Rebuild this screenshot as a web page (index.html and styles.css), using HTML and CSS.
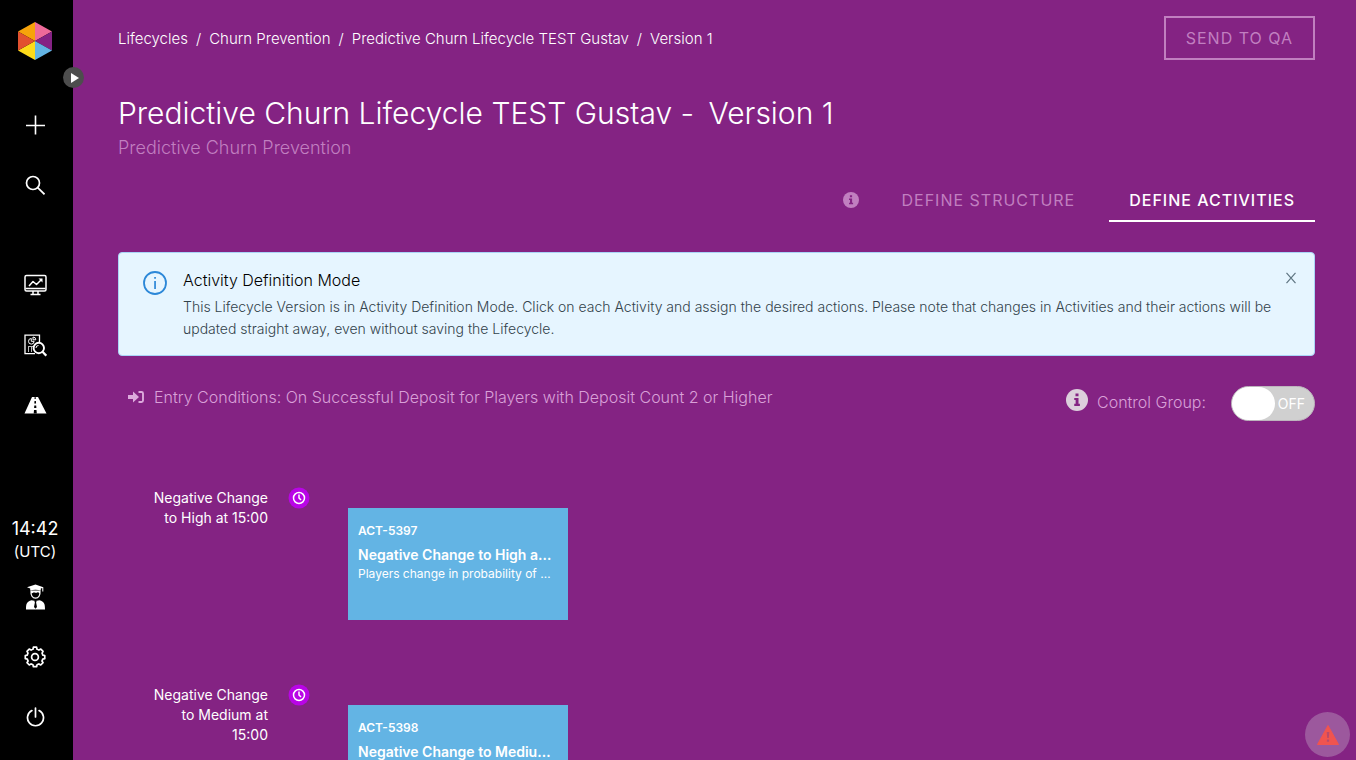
FILE: index.html
```html
<!DOCTYPE html>
<html lang="en">
<head>
  <meta charset="UTF-8" />
  <meta name="viewport" content="width=device-width, initial-scale=1.0" />
  <title>Predictive Churn Lifecycle TEST Gustav - Version 1</title>
  <link rel="stylesheet" href="styles.css">
</head>
<body>
  <nav class="sidebar">
    <a class="logo" href="#" aria-label="Home">
      <svg width="36" height="40" viewBox="0 0 36 40">
        <path d="M18 20V1L1 10.500z" fill="#f7a30a"/>
        <path d="M18 20V1l17 9.500z" fill="#ee6a9a"/>
        <path d="M18 20L35 10.500v19z" fill="#852284"/>
        <path d="M18 20l17 9.500L18 39z" fill="#63b4e4"/>
        <path d="M18 20v19L1 29.500z" fill="#fddb1a"/>
        <path d="M18 20L1 29.500v-19z" fill="#e2512f"/>
      </svg>
    </a>
    <div class="nav-group">
      <a class="nav-item" href="#" aria-label="Create">
        <svg width="20" height="20" viewBox="0 0 20 20" fill="none" stroke="#fff" stroke-width="1.600"><path d="M10.500 .5v19M1 10.500h19"/></svg>
      </a>
      <a class="nav-item" href="#" aria-label="Search">
        <svg width="20" height="20" viewBox="0 0 20 20" fill="none" stroke="#fff" stroke-width="1.700"><circle cx="8" cy="8" r="6.500"/><path d="M12.700 12.700l6.800 6.600"/></svg>
      </a>
    </div>
    <div class="nav-group">
      <a class="nav-item" href="#" aria-label="Dashboards">
        <svg width="24" height="22" viewBox="0 0 24 22" fill="none" stroke="#fff" stroke-width="1.500" stroke-linejoin="round">
          <rect x="2" y="1.500" width="21" height="15.500" rx="1.500"/>
          <path d="M2.500 14.500h20M10 17v3M15 17v3M7.500 20.500h10"/>
          <path d="M6 12l4-4.500 3.500 3L18 6"/><path d="M15.500 4.500h4v4z" fill="#fff" stroke="none"/>
        </svg>
      </a>
      <a class="nav-item" href="#" aria-label="Reports">
        <svg width="24" height="24" viewBox="0 0 24 24" fill="none" stroke="#fff" stroke-width="1.300">
          <path d="M16.500 9V2.200H2v18.500h10"/>
          <g stroke-width="1"><path d="M8.300 5.500a2.800 2.800 0 1 0 2.800 2.800H8.300z"/><path d="M10 4v2.800h2.800A2.800 2.800 0 0 0 10 4z"/></g>
          <path d="M5 13.500h5M5.500 14v5M8.500 14v5" stroke="#bbb" stroke-width="1"/>
          <circle cx="15.800" cy="15" r="5.200" stroke-width="1.900"/><path d="M19.500 18.700l3.800 4" stroke-width="2.200"/><path d="M13 15a2.500 2.500 0 0 1 2.500-2.500" stroke-width="1"/>
        </svg>
      </a>
      <a class="nav-item" href="#" aria-label="Lifecycles">
        <svg width="24" height="18" viewBox="0 0 24 18">
          <path d="M9 1h6l8.500 16.500h-22z" fill="#fff"/>
          <path d="M11.700 1h.9l.2 2h-1.300zM11.500 5h1.400l.2 2.500h-1.800zM11.300 9.500h1.900l.2 2.500h-2.300zM11 14h2.500l.3 3.500h-3.100z" fill="#000"/>
        </svg>
      </a>
    </div>
    <div class="nav-bottom">
      <div class="clock">14:42<span class="zone">(UTC)</span></div>
      <a class="nav-item" href="#" aria-label="Profile">
        <svg width="20" height="26" viewBox="0 0 20 26">
          <path d="M10.500 .5L2 3.300l3.200 1.300v2.200c3-1.500 7.600-1.500 10.600 0V4.600l1.500-.6v3.500h1V3.300z" fill="#fff"/>
          <path d="M6 7c-.4 4.500 1.500 7.200 4.500 7.200S15.400 11.500 15 7" fill="none" stroke="#fff" stroke-width="1.200"/>
          <path d="M6 9.500v-3h9v3c-1-.5-1.500-.8-2-1.500-1 1-2.500 1.200-4 .3-.8.600-1.800.8-3 1.200z" fill="#fff"/>
          <path d="M1 25.500c0-6 .8-8 5.500-9.300L10.500 17l4-.8c4.700 1.300 5.500 3.300 5.500 9.300z" fill="#fff"/>
          <path d="M9.300 16.700h2.400l-.6 1.800.9 4.500-1.500 1.800L9 23l.9-4.500z" fill="#000"/>
        </svg>
      </a>
      <a class="nav-item" href="#" aria-label="Settings">
        <svg width="22" height="22" viewBox="0 0 22 22" fill="none" stroke="#fff" stroke-width="1.700" stroke-linejoin="round">
          <path d="M8.950 3.200L9.400 1.200h3.200l.45 2c.7.2 1.300.5 1.900.9l1.900-1 2.200 2.300-1 1.800c.3.600.6 1.300.7 1.900l2 .4v3.200l-2 .4c-.2.700-.4 1.300-.8 1.900l1.100 1.700-2.300 2.300-1.800-1.100c-.6.400-1.200.6-1.900.8l-.45 2H9.400l-.45-2c-.7-.2-1.300-.4-1.900-.8L5.300 19 3 16.700 4.100 15c-.4-.6-.6-1.200-.8-1.900l-2-.4V9.500l2-.4c.1-.6.4-1.300.7-1.900L3 5.400l2.200-2.300 1.900 1c.6-.4 1.200-.7 1.850-.9z"/>
          <circle cx="11" cy="11" r="3.400"/>
        </svg>
      </a>
      <a class="nav-item" href="#" aria-label="Log out">
        <svg width="20" height="20" viewBox="0 0 20 20" fill="none" stroke="#fff" stroke-width="1.700" stroke-linecap="round"><path d="M10.500 1v9M6.900 3.600a8 8 0 1 0 7.200 0"/></svg>
      </a>
    </div>
    <button class="expand" type="button" aria-label="Expand menu">
      <svg width="8" height="10" viewBox="0 0 8 10"><path d="M0 0l8 5-8 5z" fill="#fff"/></svg>
    </button>
  </nav>

  <main class="content">
    <header class="topbar">
      <nav class="breadcrumb">
        <a href="#">Lifecycles</a><span>/</span><a href="#">Churn Prevention</a><span>/</span><a href="#">Predictive Churn Lifecycle TEST Gustav</a><span>/</span><a href="#">Version 1</a>
      </nav>
      <button class="send" type="button" disabled>SEND TO QA</button>
    </header>

    <h1>Predictive Churn Lifecycle TEST Gustav - <span class="version">Version 1</span></h1>
    <p class="subtitle">Predictive Churn Prevention</p>

    <div class="tabs">
      <svg class="tab-info" width="16" height="16" viewBox="0 0 16 16"><circle cx="8" cy="8" r="8" fill="#c17fc0"/><path d="M6.900 3.200h2.200v2H6.900zM6 6.500h3.100v4.300h1V12.300H6v-1.500h1V8H6z" fill="#842383"/></svg>
      <button class="tab" type="button">DEFINE STRUCTURE</button>
      <button class="tab active" type="button">DEFINE ACTIVITIES</button>
    </div>

    <section class="alert">
      <svg class="alert-icon" width="24" height="24" viewBox="0 0 24 24"><circle cx="12" cy="12" r="11" fill="none" stroke="#2b87d8" stroke-width="1.800"/><path d="M11.200 6h1.700v1.700h-1.700zM11.200 10h1.700v8h-1.700z" fill="#2b87d8"/></svg>
      <div class="alert-text">
        <h2>Activity Definition Mode</h2>
        <p>This Lifecycle Version is in Activity Definition Mode. Click on each Activity and assign the desired actions. Please note that changes in Activities and their actions will be updated straight away, even without saving the Lifecycle.</p>
      </div>
      <button class="close" type="button" aria-label="Close">
        <svg width="10" height="12" viewBox="0 0 10 12" fill="none" stroke="#5f7582" stroke-width="1.200"><path d="M.5 .8l9 10.400M9.500 .8l-9 10.400"/></svg>
      </button>
    </section>

    <div class="conditions">
      <p class="entry">
        <svg width="16" height="12" viewBox="0 0 16 12"><path d="M0 4h5V.5L11 6l-6 5.500V8H0z" fill="#dcaadc"/><path d="M10.500 1h3a1.500 1.500 0 0 1 1.500 1.500v7a1.500 1.500 0 0 1-1.500 1.500h-3" fill="none" stroke="#dcaadc" stroke-width="1.900"/></svg>
        Entry Conditions: On Successful Deposit for Players with Deposit Count 2 or Higher
      </p>
      <div class="control-group">
        <svg class="control-info" width="22" height="22" viewBox="0 0 16 16"><circle cx="8" cy="8" r="8" fill="#dccfdc"/><path d="M6.900 3.200h2.200v2H6.900zM6 6.500h3.100v4.300h1V12.300H6v-1.500h1V8H6z" fill="#842383"/></svg>
        <label for="control">Control Group:</label>
        <span class="switch">
          <input type="checkbox" id="control">
          <span class="state">OFF</span>
        </span>
      </div>
    </div>

    <section class="timeline">
      <article class="step">
        <div class="when">Negative Change to High at 15:00</div>
        <svg class="time-icon" width="22" height="22" viewBox="0 0 22 22"><circle cx="11" cy="11" r="10.500" fill="#b905e6"/><g fill="none" stroke="#fff" stroke-width="1.500"><circle cx="11" cy="11" r="5.500"/><path d="M11 7.500V11l2 2"/></g></svg>
        <a class="card" href="#">
          <span class="code">ACT-5397</span>
          <strong>Negative Change to High a…</strong>
          <span class="desc">Players change in probability of …</span>
        </a>
      </article>
      <article class="step">
        <div class="when">Negative Change to Medium at 15:00</div>
        <svg class="time-icon" width="22" height="22" viewBox="0 0 22 22"><circle cx="11" cy="11" r="10.500" fill="#b905e6"/><g fill="none" stroke="#fff" stroke-width="1.500"><circle cx="11" cy="11" r="5.500"/><path d="M11 7.500V11l2 2"/></g></svg>
        <a class="card" href="#">
          <span class="code">ACT-5398</span>
          <strong>Negative Change to Mediu…</strong>
          <span class="desc">Players change in probability of …</span>
        </a>
      </article>
    </section>
  </main>

  <button class="warning" type="button" aria-label="Warnings">
    <svg width="22" height="20" viewBox="0 0 22 20"><path d="M11 .5L21.500 19.500H.5z" fill="#f0544f" stroke="#f0544f" stroke-linejoin="round"/><path d="M9.700 7h2.600l-.5 6h-1.600zM9.900 14.500h2.200v2.200H9.900z" fill="#b94a6c"/></svg>
  </button>
</body>
</html>
```
FILE: styles.css
```css
* {
  box-sizing: border-box;
}
body {
  margin: 0;
  display: flex;
  height: 100vh;
  overflow: hidden;
  font-family: Inter, sans-serif;
  font-size: 14px;
  background: #842383;
  color: #fff;
}
a {
  color: inherit;
  text-decoration: none;
}
button {
  font-family: inherit;
  color: inherit;
  background: none;
  border: none;
  padding: 0;
  cursor: pointer;
}
h1, h2, p {
  margin: 0;
}
svg {
  flex-shrink: 0;
}

/* sidebar */
.sidebar {
  position: relative;
  display: flex;
  flex-direction: column;
  flex: 0 0 73px;
  padding: 21px 3px 13px 0;
  background: #000;
}
.logo {
  display: flex;
  justify-content: center;
  height: 40px;
  margin-bottom: 34px;
}
.nav-group {
  margin-bottom: 40px;
}
.nav-item {
  display: flex;
  align-items: center;
  justify-content: center;
  height: 60px;
}
.nav-bottom {
  margin-top: auto;
}
.clock {
  font-size: 18px;
  line-height: 24px;
  text-align: center;
  margin-bottom: 4px;
}
.zone {
  display: block;
  font-size: 15px;
  line-height: 22px;
}
.expand {
  position: absolute;
  top: 67px;
  right: -11px;
  display: flex;
  align-items: center;
  justify-content: center;
  width: 21px;
  height: 21px;
  padding-left: 2px;
  border-radius: 50%;
  background: #4d4d4d;
}

/* page */
.content {
  flex: 1;
  min-width: 0;
  padding: 16px 41px 40px 45px;
  overflow-y: auto;
  scrollbar-width: none;
}
.topbar {
  display: flex;
  align-items: center;
  justify-content: space-between;
}
.breadcrumb {
  display: flex;
  gap: 8px;
  font-size: 15px;
  font-weight: 300;
}
.send {
  height: 44px;
  padding: 0 20px;
  border: 2px solid #c17fc0;
  font-size: 16px;
  letter-spacing: 1px;
  color: #c17fc0;
}
h1 {
  margin-top: 33px;
  font-size: 30px;
  line-height: 40px;
  font-weight: 300;
}
.version {
  margin-left: 6px;
}
.subtitle {
  margin-top: 3px;
  font-size: 18px;
  line-height: 24px;
  font-weight: 300;
  color: #c17fc0;
}
.tabs {
  display: flex;
  align-items: center;
  justify-content: flex-end;
  margin-top: 18px;
}
.tab-info {
  margin-right: 8px;
}
.tab {
  height: 44px;
  margin-left: 14px;
  padding: 2px 20px 0;
  border-bottom: 2px solid transparent;
  font-size: 16px;
  letter-spacing: 1px;
  color: #c17fc0;
}
.tab.active {
  border-color: #fff;
  font-weight: 500;
  color: #fff;
}

.alert {
  display: flex;
  margin-top: 30px;
  padding: 15px 18px 15px 24px;
  border: 1px solid #a9d4f7;
  border-radius: 4px;
  background: #e6f5ff;
}
.alert-icon {
  margin-top: 3px;
}
.alert-text {
  flex: 1;
  margin: 0 2px 0 16px;
}
.alert h2 {
  font-size: 16px;
  line-height: 24px;
  font-weight: 300;
  color: #000;
}
.alert p {
  margin-top: 4px;
  line-height: 22px;
  font-weight: 300;
  color: #33434b;
}
.close {
  display: flex;
  align-self: flex-start;
  margin-top: 4px;
}

.conditions {
  display: flex;
  justify-content: space-between;
  align-items: flex-start;
  margin-top: 30px;
  font-size: 16px;
  font-weight: 300;
  color: #d9a0d8;
}
.entry {
  display: flex;
  align-items: center;
  gap: 10px;
  padding-left: 10px;
  line-height: 22px;
}
.control-group {
  display: flex;
  align-items: flex-start;
}
.control-info {
  margin-top: 3px;
}
.control-group label {
  margin: 4px 25px 0 9px;
  line-height: 24px;
}
.switch {
  position: relative;
  display: block;
  width: 84px;
  height: 35px;
}
.switch input {
  appearance: none;
  display: block;
  width: 100%;
  height: 100%;
  margin: 0;
  border: 1px solid #bdb4bd;
  border-radius: 18px;
  background: #d0d0d0;
}
.switch input::before {
  content: "";
  display: block;
  width: 43px;
  height: 33px;
  border-radius: 17px;
  background: #fff;
}
.state {
  position: absolute;
  top: 8px;
  right: 10px;
  font-size: 14px;
  line-height: 20px;
  font-weight: 400;
  color: #fff;
  pointer-events: none;
}

.timeline {
  margin-top: 67px;
}
.step {
  display: flex;
  align-items: flex-start;
  min-height: 197px;
}
.when {
  width: 120px;
  margin-left: 30px;
  line-height: 20px;
  text-align: right;
}
.time-icon {
  margin: -1px 38px 0 20px;
}
.card {
  width: 220px;
  height: 112px;
  margin-top: 20px;
  padding: 13px 10px;
  background: #63b4e4;
}
.card > * {
  display: block;
  white-space: nowrap;
}
.code {
  font-size: 12px;
  line-height: 20px;
  font-weight: 600;
}
.card strong {
  margin-top: 4px;
  line-height: 20px;
  font-weight: 600;
}
.desc {
  font-size: 12px;
  line-height: 18px;
}

.warning {
  position: fixed;
  right: 6px;
  bottom: 3px;
  display: flex;
  align-items: center;
  justify-content: center;
  width: 45px;
  height: 45px;
  border-radius: 50%;
  background: #9c589d;
}
```
